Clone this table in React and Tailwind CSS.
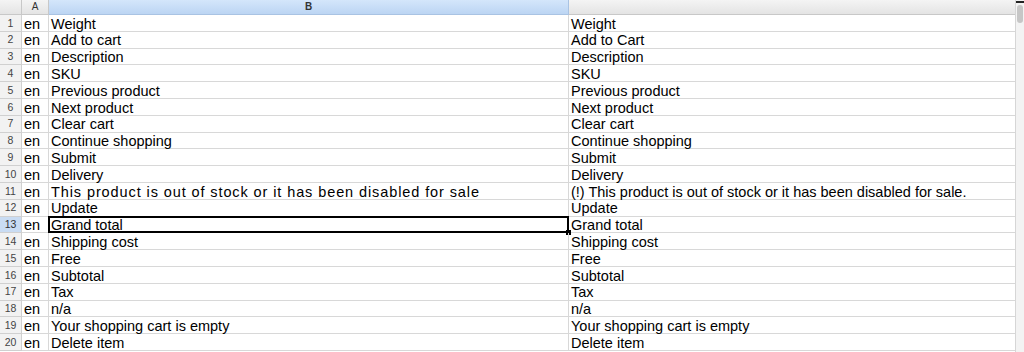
import React from "react";

const rows = [
  ["Weight", "Weight"],
  ["Add to cart", "Add to Cart"],
  ["Description", "Description"],
  ["SKU", "SKU"],
  ["Previous product", "Previous product"],
  ["Next product", "Next product"],
  ["Clear cart", "Clear cart"],
  ["Continue shopping", "Continue shopping"],
  ["Submit", "Submit"],
  ["Delivery", "Delivery"],
  ["This product is out of stock or it has been disabled for sale", "(!) This product is out of stock or it has been disabled for sale."],
  ["Update", "Update"],
  ["Grand total", "Grand total"],
  ["Shipping cost", "Shipping cost"],
  ["Free", "Free"],
  ["Subtotal", "Subtotal"],
  ["Tax", "Tax"],
  ["n/a", "n/a"],
  ["Your shopping cart is empty", "Your shopping cart is empty"],
  ["Delete item", "Delete item"],
];

export default function App() {
  return (
    <div
      className="w-[1024px] h-[352px] overflow-hidden flex bg-white text-black"
      style={{ fontFamily: '"Liberation Sans", Arial, sans-serif' }}
    >
      <div className="w-[1016px] flex flex-col border-r border-[#d6d6d6]">
        {/* header */}
        <div className="flex h-[15px] shrink-0 text-[10px] text-[#333] leading-none">
          <div className="w-[22px] shrink-0 bg-gradient-to-b from-[#f4f4f4] to-[#e4e4e4] border-r border-b border-[#c8c8c8]" />
          <div className="w-[27px] shrink-0 flex items-center justify-center bg-gradient-to-b from-[#f4f4f4] to-[#e4e4e4] border-r border-b border-[#c8c8c8]">
            A
          </div>
          <div className="w-[520px] shrink-0 flex items-center justify-center bg-gradient-to-b from-[#d4e6fb] to-[#bcd5f3] border-r border-b border-[#a9c3e3] font-bold">
            B
          </div>
          <div className="flex-1 bg-gradient-to-b from-[#f4f4f4] to-[#e4e4e4] border-b border-[#c8c8c8]" />
        </div>
        {/* body */}
        {rows.map(([b, c], i) => {
          const sel = i === 12;
          const wide = i === 10;
          return (
            <div key={i} className="flex h-[16.8px] shrink-0 text-[14.5px] leading-none">
              <div
                className={
                  "w-[22px] shrink-0 flex items-center justify-center text-[10.5px] border-r border-b border-[#d0d0d0] " +
                  (sel ? "bg-[#c9dcf3] text-[#333]" : "bg-[#f2f2f2] text-[#444]")
                }
              >
                {i + 1}
              </div>
              <div className="w-[27px] shrink-0 flex items-center pl-[2px] pt-[2px] border-r border-b border-[#d8d8d8]">
                en
              </div>
              <div
                className={
                  "w-[520px] shrink-0 flex items-center pl-[2px] pt-[2px] border-r border-b border-[#d8d8d8] relative whitespace-nowrap " +
                  (wide ? "tracking-[0.9px]" : "")
                }
              >
                {b}
                {sel && (
                  <>
                    <div className="absolute -left-[1px] -top-[1px] -right-[1px] -bottom-[1px] border-2 border-black" />
                    <div className="absolute -right-[3px] -bottom-[3px] w-[5px] h-[5px] bg-black" />
                  </>
                )}
              </div>
              <div className="flex-1 flex items-center pl-[2px] pt-[2px] border-b border-[#d8d8d8] whitespace-nowrap">
                {c}
              </div>
            </div>
          );
        })}
      </div>
      {/* scrollbar */}
      <div className="w-[8px] shrink-0 bg-[#f3f3f3] flex flex-col items-center">
        <div className="w-full h-[2px] bg-[#222] mt-[1px]" />
        <div className="w-[6px] h-[18px] mt-[2px] rounded-[3px] bg-[#c6c6c6]" />
      </div>
    </div>
  );
}
